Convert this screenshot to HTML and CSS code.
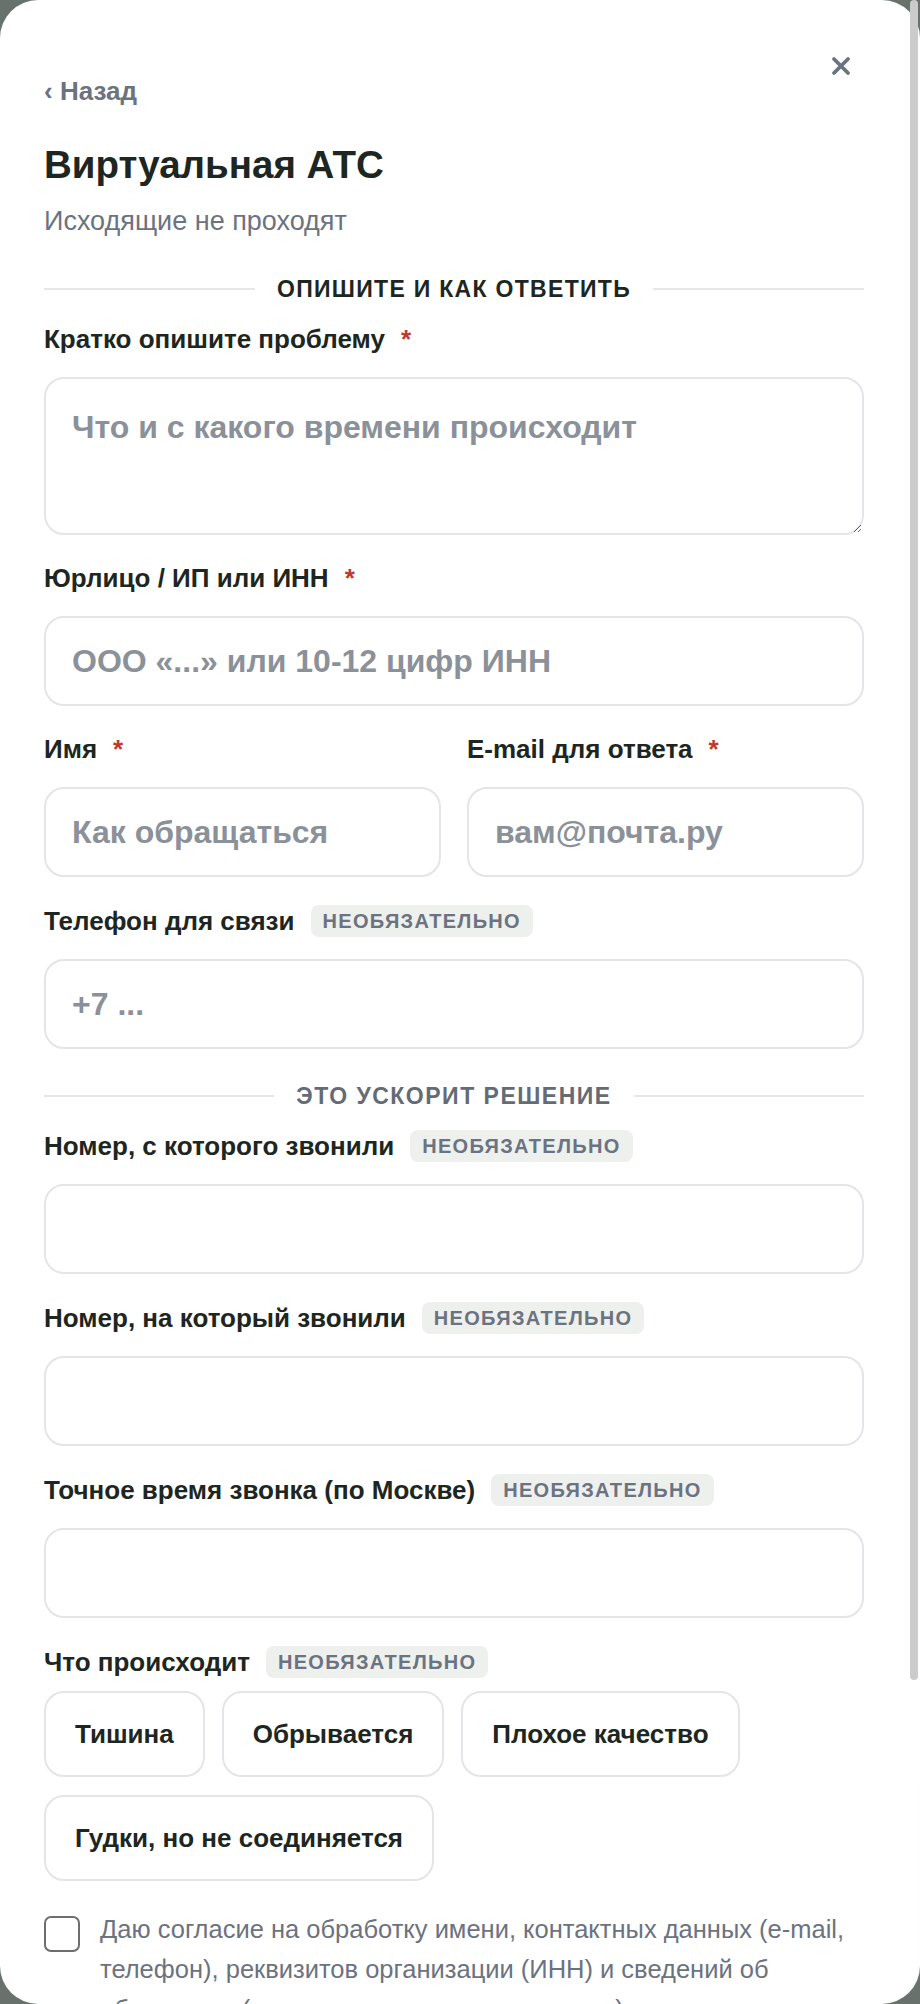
FILE: index.html
```html
<!DOCTYPE html>
<html lang="ru">
<head>
    <meta charset="UTF-8">
    <meta name="viewport" content="width=device-width, initial-scale=1.0">
    <title>Виртуальная АТС — обращение</title>
    <link rel="stylesheet" href="styles.css">
</head>
<body>

<div class="sheet">
    <!-- Close button in the corner -->
    <button class="close" type="button" aria-label="Закрыть">
        <svg width="20" height="20" viewBox="0 0 20 20"><path d="M3 3 L17 17 M17 3 L3 17"/></svg>
    </button>

    <a class="back" href="#">‹ Назад</a>
    <h1 class="title">Виртуальная АТС</h1>
    <p class="subtitle">Исходящие не проходят</p>

    <form class="ticket" action="/support" method="post">
        <div class="divider"><span>Опишите и как ответить</span></div>

        <div class="field">
            <div class="field-label"><label for="problem">Кратко опишите проблему</label><span class="req">*</span></div>
            <textarea id="problem" name="problem" class="input area" placeholder="Что и с какого времени происходит" required></textarea>
        </div>

        <div class="field">
            <div class="field-label"><label for="company">Юрлицо / ИП или ИНН</label><span class="req">*</span></div>
            <input type="text" id="company" name="company" class="input" placeholder="ООО «...» или 10-12 цифр ИНН" required>
        </div>

        <div class="field pair">
            <div>
                <div class="field-label"><label for="name">Имя</label><span class="req">*</span></div>
                <input type="text" id="name" name="name" class="input" placeholder="Как обращаться" required>
            </div>
            <div>
                <div class="field-label"><label for="email">E-mail для ответа</label><span class="req">*</span></div>
                <input type="email" id="email" name="email" class="input" placeholder="вам@почта.ру" required>
            </div>
        </div>

        <div class="field">
            <div class="field-label"><label for="phone">Телефон для связи</label><span class="tag">Необязательно</span></div>
            <input type="tel" id="phone" name="phone" class="input" placeholder="+7 ...">
        </div>

        <div class="divider soft"><span>Это ускорит решение</span></div>

        <div class="field">
            <div class="field-label"><label for="fromNumber">Номер, с которого звонили</label><span class="tag">Необязательно</span></div>
            <input type="tel" id="fromNumber" name="fromNumber" class="input">
        </div>

        <div class="field">
            <div class="field-label"><label for="toNumber">Номер, на который звонили</label><span class="tag">Необязательно</span></div>
            <input type="tel" id="toNumber" name="toNumber" class="input">
        </div>

        <div class="field">
            <div class="field-label"><label for="callTime">Точное время звонка (по Москве)</label><span class="tag">Необязательно</span></div>
            <input type="text" id="callTime" name="callTime" class="input">
        </div>

        <div class="field">
            <div class="field-label"><span>Что происходит</span><span class="tag">Необязательно</span></div>
            <div class="chips">
                <button type="button" class="chip">Тишина</button>
                <button type="button" class="chip">Обрывается</button>
                <button type="button" class="chip">Плохое качество</button>
                <button type="button" class="chip">Гудки, но не соединяется</button>
            </div>
        </div>

        <label class="consent">
            <input type="checkbox" name="consent" required>
            <span>Даю согласие на обработку имени, контактных данных (e-mail, телефон), реквизитов организации (ИНН) и сведений об обращении (номера и время звонков, текст) для ответа на обращение.</span>
        </label>

        <button type="submit" class="submit">Отправить</button>
        <p class="note">Ответим на указанный e-mail. Обычно в течение рабочего дня.</p>
    </form>
</div>

<!-- scroll thumb drawn over the sheet's right edge -->
<div class="scroll-thumb"></div>

<script>
    // Chips toggle on click
    var chips = document.querySelectorAll('.chip');
    chips.forEach(function(chip) {
        chip.onclick = function() {
            chip.classList.toggle('active');
        };
    });
</script>

</body>
</html>
```

FILE: styles.css
```css
body {
    margin: 0;
    background-color: #68716b; /* dimmed page behind the sheet */
    font-family: "Liberation Sans", Arial, sans-serif;
    color: #1d2621;
}
.sheet {
    position: relative;
    height: 100vh;
    box-sizing: border-box;
    padding: 76px 56px 100px 44px;
    background-color: #fff;
    border-radius: 38px;
    overflow-y: auto;
}
.scroll-thumb {
    position: fixed;
    top: 0;
    right: 2px;
    width: 8px;
    height: 1680px;
    border-radius: 4px;
    background-color: #cbcbcb;
}
.close {
    position: absolute;
    top: 56px;
    right: 69px;
    width: 20px;
    height: 20px;
    padding: 0;
    border: none;
    background: none;
    cursor: pointer;
}
.close svg {
    display: block;
    stroke: #6b7280;
    stroke-width: 3.8;
    stroke-linecap: round;
    fill: none;
}
.back {
    display: block;
    font-size: 26px;
    line-height: 30px;
    font-weight: 700;
    color: #6b7280;
    text-decoration: none;
}
.title {
    margin: 36px 0 0;
    font-size: 38.5px;
    line-height: 46px;
    font-weight: 700;
}
.subtitle {
    margin: 17px 0 0;
    font-size: 27px;
    line-height: 32px;
    color: #6b7280;
}
.divider {
    display: flex;
    align-items: center;
    gap: 22px;
    margin: 40px 0 23px;
    font-size: 23px;
    line-height: 24px;
    font-weight: 700;
    letter-spacing: 1.3px;
    text-transform: uppercase;
}
.divider::before, .divider::after {
    content: "";
    flex: 1;
    height: 2px;
    background-color: #e6e7ea;
}
.divider.soft {
    margin: 35px 0 22px;
    letter-spacing: 1.5px;
    color: #646b75;
}
.field + .field {
    margin-top: 28px;
}
.field-label {
    display: flex;
    align-items: center;
    margin-bottom: 22px;
    font-size: 26px;
    line-height: 31px;
    font-weight: 700;
}
.req {
    margin-left: 16px;
    color: #c0392b;
}
.tag {
    margin-left: 16px;
    padding: 0 12px;
    height: 32px;
    line-height: 32px;
    border-radius: 8px;
    background-color: #eef0ee;
    color: #6b7280;
    font-size: 20px;
    letter-spacing: 1.3px;
    text-transform: uppercase;
}
.input {
    display: block;
    width: 100%;
    height: 90px;
    box-sizing: border-box;
    padding: 0 26px;
    border: 2px solid #e4e5e9;
    border-radius: 20px;
    background-color: #fff;
    font-family: inherit;
    font-size: 32px;
    font-weight: 700;
    color: #1d2621;
    outline: none;
}
.input::placeholder {
    color: #8b9199;
}
.area {
    height: 158px;
    padding: 28px 26px;
    line-height: 1.3;
    resize: vertical;
}
.pair {
    display: grid;
    grid-template-columns: 1fr 1fr;
    column-gap: 26px;
}
.chips {
    display: flex;
    flex-wrap: wrap;
    gap: 18px 17px;
    margin-top: -9px;
}
.chip {
    height: 86px;
    padding: 0 29px;
    border: 2px solid #e4e5e9;
    border-radius: 20px;
    background-color: #fff;
    font-family: inherit;
    font-size: 26px;
    font-weight: 700;
    color: #1d2621;
    cursor: pointer;
}
.chip.active {
    border-color: #1d2621;
}
.consent {
    display: flex;
    gap: 20px;
    margin-top: 28px;
    font-size: 25.5px;
    line-height: 40px;
    color: #6b7280;
}
.consent input {
    appearance: none;
    flex: none;
    width: 36px;
    height: 36px;
    margin: 7px 0 0;
    border: 2px solid #6e6e6e;
    border-radius: 7px;
}
.submit {
    display: block;
    width: 100%;
    height: 90px;
    margin-top: 32px;
    border: none;
    border-radius: 20px;
    background-color: #1d2621;
    color: #fff;
    font-family: inherit;
    font-size: 28px;
    font-weight: 700;
}
.note {
    margin: 24px 0 0;
    font-size: 22px;
    line-height: 32px;
    color: #6b7280;
    text-align: center;
}
```
